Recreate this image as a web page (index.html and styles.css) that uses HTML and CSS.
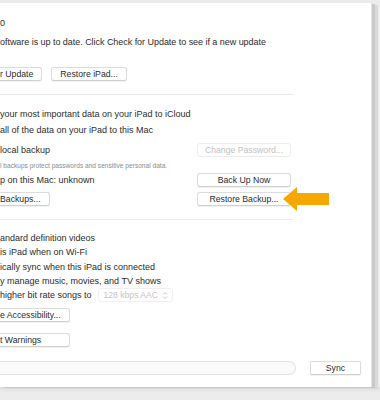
FILE: index.html
```html
<!DOCTYPE html>
<html lang="en">
<head>
    <meta charset="UTF-8">
    <title>iPad Summary</title>
    <link rel="stylesheet" href="styles.css">
</head>
<body>
    <div class="window">
        <section class="software">
            <div class="line version">0</div>
            <div class="line">oftware is up to date. Click Check for Update to see if a new update</div>
            <div class="btn-row">
                <button class="btn cut">r Update</button>
                <button class="btn">Restore iPad...</button>
            </div>
        </section>

        <hr class="sep">

        <section class="backups">
            <div class="line">your most important data on your iPad to iCloud</div>
            <div class="line">all of the data on your iPad to this Mac</div>
            <div class="backup-grid">
                <div class="line">local backup</div>
                <button class="btn wide disabled">Change Password...</button>
                <div class="note">l backups protect passwords and sensitive personal data.</div>
                <div></div>
                <div class="line">p on this Mac: unknown</div>
                <button class="btn wide">Back Up Now</button>
                <div><button class="btn cut">Backups...</button></div>
                <div class="restore">
                    <button class="btn wide">Restore Backup...</button>
                    <!-- pointer from the guide -->
                    <svg class="arrow" width="48" height="26" viewBox="0 0 48 26">
                        <path d="M0 12 L14 0 L14 6 L46 6 L46 18 L14 18 L14 24 Z" fill="#f6a800"/>
                    </svg>
                </div>
            </div>
        </section>

        <hr class="sep">

        <section class="options">
            <div class="line">andard definition videos</div>
            <div class="line">is iPad when on Wi-Fi</div>
            <div class="line">ically sync when this iPad is connected</div>
            <div class="line">y manage music, movies, and TV shows</div>
            <div class="line bitrate">
                higher bit rate songs to
                <span class="popup">128 kbps AAC
                    <svg width="6" height="9" viewBox="0 0 6 9"><path d="M1 3.5 L3 1.5 L5 3.5 M1 5.5 L3 7.5 L5 5.5" fill="none" stroke="#c4c4c4" stroke-width="0.9"/></svg>
                </span>
            </div>
            <button class="btn cut access">e Accessibility...</button>
            <button class="btn cut warn">t Warnings</button>
        </section>

        <footer class="bottom-bar">
            <div class="capacity"></div>
            <button class="btn sync">Sync</button>
        </footer>
    </div>
</body>
</html>
```

FILE: styles.css
```css
body {
    margin: 0;
    background: linear-gradient(#dedede, #ececec 6px) 0 387px / 100% 13px no-repeat, #ececec;
    font-family: "Liberation Sans", Arial, sans-serif;
    font-size: 9px;
    color: #2c2c2c;
    width: 380px;
    height: 400px;
    overflow: hidden;
}
.window {
    margin-top: 3px;
    width: 371px;
    height: 384px;
    background: white;
    border-right: 1px solid #e4e4e4;
    box-shadow: 3px 1px 0 #c9c9c9, 6px 2px 0 #dadada;
    position: relative;
}
.line {
    height: 15px;
    line-height: 15px;
    white-space: nowrap;
}
.software {
    padding-top: 13px;
    letter-spacing: -0.04px;
}
.version {
    margin-bottom: 4px;
}
.btn-row {
    display: flex;
    gap: 9px;
    margin-top: 17px;
    letter-spacing: 0;
}
.btn {
    font-family: inherit;
    font-size: 8.7px;
    color: #2c2c2c;
    height: 14px;
    line-height: 12px;
    padding: 0 8px;
    background: white;
    border: 1px solid #dcdcdc;
    border-bottom-color: #cfcfcf;
    border-radius: 3px;
    box-shadow: 0 0.5px 1px rgba(0,0,0,0.06);
    white-space: nowrap;
}
.btn.cut {
    border-left: none;
    border-radius: 0 3px 3px 0;
    padding-left: 0;
    text-align: left;
}
.btn.wide {
    width: 94px;
    padding: 0;
    text-align: center;
}
.btn.disabled {
    color: #c2c2c2;
    border-color: #ececec;
    box-shadow: none;
}
.sep {
    border: none;
    border-top: 1px solid #ececec;
    margin: 0;
    width: 293px;
}
.software + .sep {
    margin-top: 13px;
}
.backups {
    padding-top: 12px;
}
.backups > .line {
    height: 15.5px;
    line-height: 15.5px;
}
.backup-grid {
    display: grid;
    grid-template-columns: 197px 94px;
    grid-template-rows: 16px 14px 16px 22px;
    align-items: center;
    margin-top: 4px;
}
.note {
    font-size: 6.6px;
    color: #8c8c8c;
    white-space: nowrap;
}
.restore {
    position: relative;
    height: 14px;
}
.arrow {
    position: absolute;
    left: 86px;
    top: -5px;
}
.backups + .sep {
    margin-top: 9px;
}
.options {
    padding-top: 11px;
}
.options .line {
    height: 14.3px;
    line-height: 14.3px;
}
.bitrate {
    display: flex;
    align-items: center;
    gap: 6px;
}
.popup {
    display: inline-flex;
    align-items: center;
    justify-content: space-between;
    width: 64px;
    height: 12px;
    padding: 0 4px 0 5px;
    border: 1px solid #f0f0f0;
    border-radius: 3px;
    color: #c4c4c4;
    font-size: 8.6px;
}
.access {
    display: block;
    width: 70px;
    margin-top: 6px;
}
.warn {
    display: block;
    width: 70px;
    margin-top: 11px;
}
.bottom-bar {
    display: flex;
    align-items: center;
    margin-top: 14px;
}
.capacity {
    width: 295px;
    height: 12px;
    background: #fafafa;
    border: 1px solid #e2e2e2;
    border-left: none;
    border-radius: 0 7px 7px 0;
}
.sync {
    margin-left: 14px;
    width: 51px;
    height: 14px;
    padding: 0;
    text-align: center;
    border-radius: 2px;
}
```
